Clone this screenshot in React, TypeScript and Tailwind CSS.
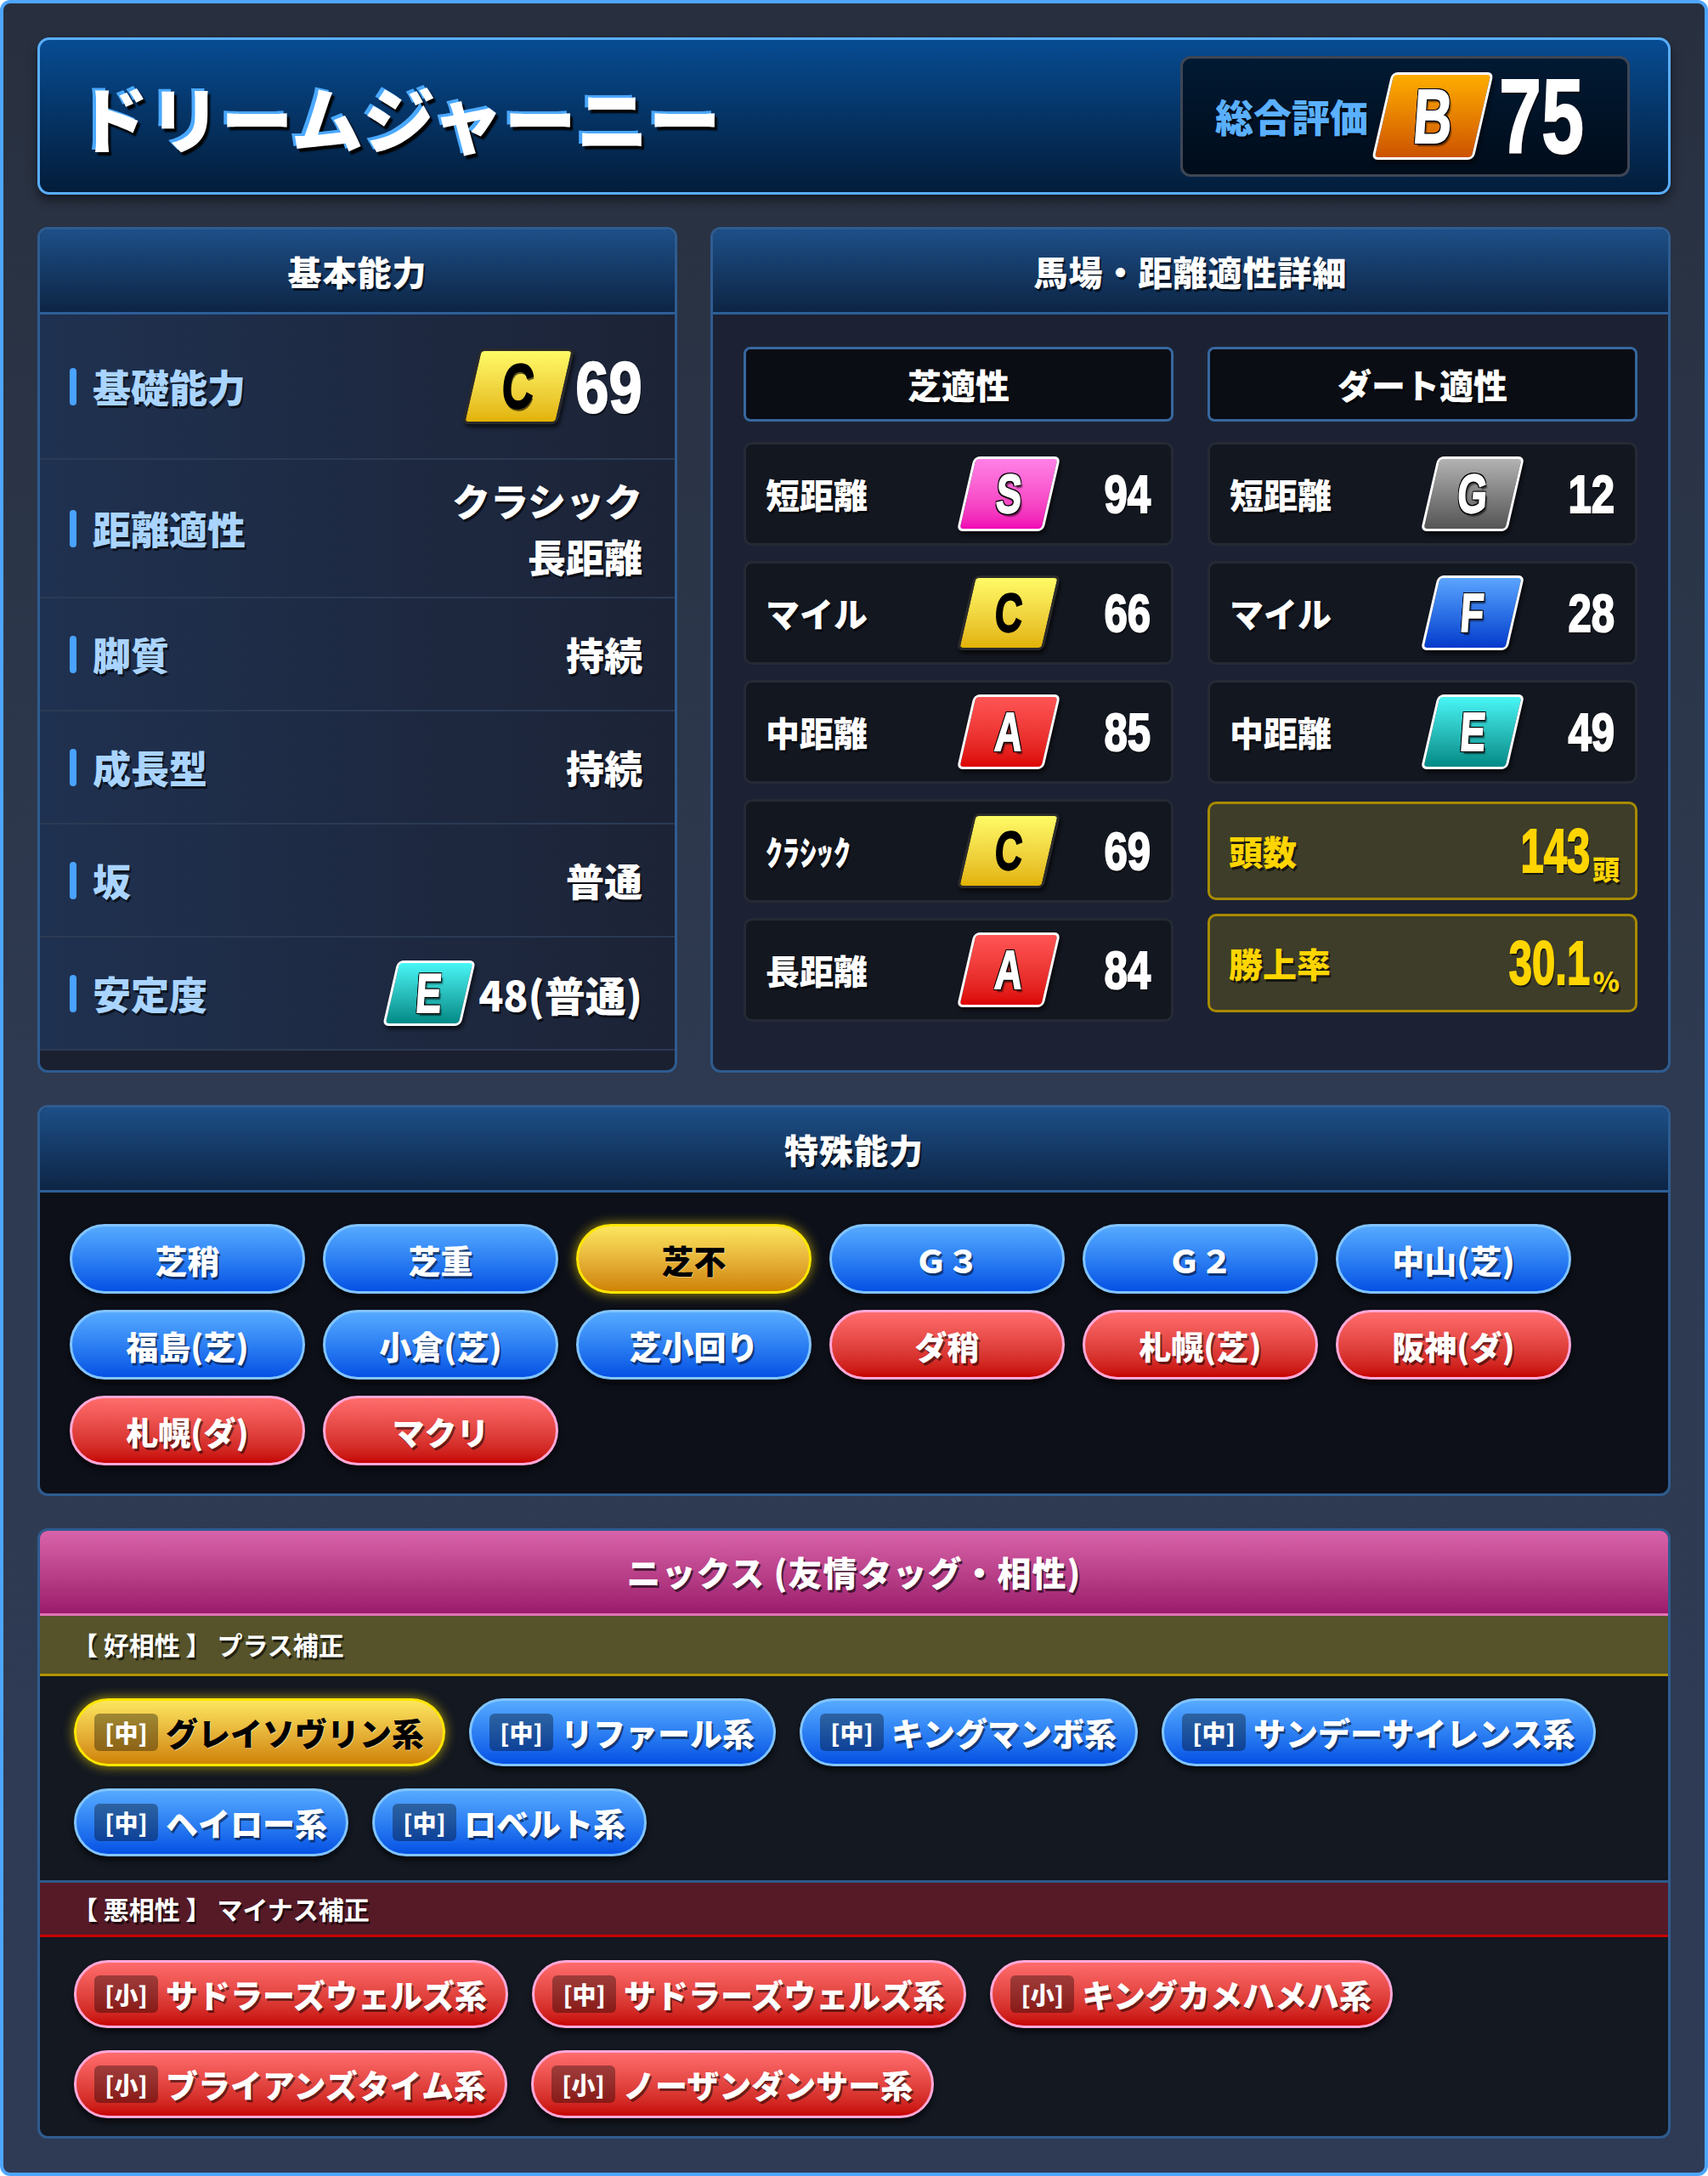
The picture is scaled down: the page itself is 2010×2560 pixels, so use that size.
import React from "react";

const JP = "font-['Noto_Sans_CJK_JP','Noto_Sans_CJK_SC',sans-serif]";
const NUM = "font-['Liberation_Sans','Arimo',sans-serif]";

type G = "S" | "A" | "B" | "C" | "E" | "F" | "G";

const gradeStyle: Record<G, string> = {
  S: "from-[#ff80e6] to-[#f000b4] border-white",
  A: "from-[#ff5454] to-[#dc0000] border-white",
  B: "from-[#ffad00] to-[#cc5200] border-white",
  C: "from-[#fffb66] to-[#e2b300] border-[#2b2b2b]",
  E: "from-[#48f6f6] to-[#008a86] border-white",
  F: "from-[#5ba4ff] to-[#0838cc] border-white",
  G: "from-[#b3b3b3] to-[#555555] border-white",
};

const badgeSize = {
  xl: "w-[120px] h-[103px] text-[90px]",
  lg: "w-[112px] h-[89px] text-[74px]",
  md: "w-[102px] h-[88px] text-[64px]",
  sm: "w-[92px] h-[77px] text-[65px]",
};

const outlined =
  "text-white [text-shadow:-2px_-2px_0_#000,2px_-2px_0_#000,-2px_2px_0_#000,2px_2px_0_#000,0_-2px_0_#000,0_2px_0_#000,-2px_0_0_#000,2px_0_0_#000,4px_4px_2px_rgba(0,0,0,0.6)]";

const shadowW = "[text-shadow:2px_3px_0_rgba(0,0,0,0.6)]";

// condensed digits: a regular bold face squeezed sideways inside a box of the squeezed width
function Narrow({
  text,
  box,
  squeeze,
  side = "end",
}: {
  text: string;
  box: string;
  squeeze: string;
  side?: "start" | "end";
}) {
  return (
    <span className={`flex ${box} ${side === "end" ? "justify-end" : "justify-start"}`}>
      <span
        className={`inline-block shrink-0 font-bold leading-none [-webkit-text-stroke:2px_currentColor] ${NUM} ${squeeze} ${
          side === "end" ? "origin-right" : "origin-left"
        }`}
      >
        {text}
      </span>
    </span>
  );
}

function Grade({ g, size }: { g: G; size: keyof typeof badgeSize }) {
  return (
    <div
      className={`flex shrink-0 items-center justify-center rounded-[7px] border-[3px] bg-gradient-to-b skew-x-[-13deg] shadow-[3px_4px_4px_rgba(0,0,0,0.6)] ${gradeStyle[g]} ${badgeSize[size]}`}
    >
      <span
        className={`inline-block skew-x-[13deg] scale-x-[0.7] font-bold leading-none [-webkit-text-stroke:2px_currentColor] ${NUM} ${
          g === "C" ? "text-black" : outlined
        }`}
      >
        {g}
      </span>
    </div>
  );
}

function PanelHeader({ title, pink }: { title: string; pink?: boolean }) {
  return (
    <div
      className={
        pink
          ? "flex h-[100px] items-center justify-center border-b-[3px] border-[#e273b6] bg-gradient-to-b from-[#d963aa] to-[#9b1a6b]"
          : "flex h-[100px] items-center justify-center border-b-[3px] border-[#2d5f98] bg-gradient-to-b from-[#1d4f88] to-[#0d2545]"
      }
    >
      <h2 className={`text-[40px] font-black tracking-[1px] text-white ${shadowW}`}>{title}</h2>
    </div>
  );
}

function BasicRow({
  label,
  h,
  children,
}: {
  label: string;
  h: string;
  children: React.ReactNode;
}) {
  return (
    <div className={`flex items-center justify-between border-b-2 border-[#2b3a54] pl-[35px] pr-[38px] ${h}`}>
      <div className="flex items-center gap-[19px]">
        <span className="h-[44px] w-[8px] rounded-full bg-[#4aa3ff]" />
        <span className={`text-[45px] font-black text-[#a9d4ff] ${shadowW}`}>{label}</span>
      </div>
      <div className={`text-right text-[45px] font-black leading-[66px] text-white ${shadowW}`}>{children}</div>
    </div>
  );
}

function AptRow({ label, g, v }: { label: string; g: G; v: string }) {
  return (
    <div className="flex h-[122px] items-center rounded-[10px] border-[3px] border-[#252a35] bg-[#131720] pl-[23px] pr-[24px]">
      <span className={`flex-1 text-[40px] font-black text-white ${shadowW}`}>{label}</span>
      <Grade g={g} size="md" />
      <span className={`text-[63px] text-white ${shadowW}`}>
        <Narrow text={v} box="w-[116px]" squeeze="scale-x-[0.78]" />
      </span>
    </div>
  );
}

function StatBox({ label, v, box, unit }: { label: string; v: string; box: string; unit: string }) {
  return (
    <div className="flex h-[116px] items-center justify-between rounded-[10px] border-[3px] border-[#a88a00] bg-[#3e3d29] pl-[22px] pr-[18px]">
      <span className={`text-[40px] font-black text-[#ffd500] ${shadowW}`}>{label}</span>
      <span className={`flex items-end font-bold text-[#ffd500] ${shadowW}`}>
        <span className="text-[72px]">
          <Narrow text={v} box={box} squeeze="scale-x-[0.68]" />
        </span>
        <span className="ml-[3px] text-[32px] font-black leading-none">{unit}</span>
      </span>
    </div>
  );
}

type Tone = "blue" | "red" | "gold";
const pillTone: Record<Tone, string> = {
  blue: "bg-gradient-to-b from-[#56aaff] to-[#0650e4] border-[#82c4ff] text-white shadow-[0_5px_6px_rgba(0,0,0,0.6)]",
  red: "bg-gradient-to-b from-[#ff6c6c] to-[#c60000] border-[#ffa8d8] text-white shadow-[0_5px_6px_rgba(0,0,0,0.6)]",
  gold: "bg-gradient-to-b from-[#fce65e] to-[#cf8300] border-[#ffe600] text-black shadow-[0_0_14px_rgba(255,222,0,0.65)]",
};

function SkillPill({ t, tone }: { t: string; tone: Tone }) {
  return (
    <div className={`flex h-[82px] w-[277px] items-center justify-center rounded-full border-[3px] ${pillTone[tone]}`}>
      <span
        className={`text-[38px] font-black ${
          tone === "gold" ? "[text-shadow:1px_1px_0_rgba(255,255,255,0.4)]" : "[text-shadow:2px_3px_0_rgba(0,0,0,0.5)]"
        }`}
      >
        {t}
      </span>
    </div>
  );
}

function NickPill({ tag, t, tone }: { tag: string; t: string; tone: Tone }) {
  return (
    <div className={`flex h-[80px] items-center gap-[9px] rounded-full border-[3px] pl-[21px] pr-[22px] ${pillTone[tone]}`}>
      <span className="flex h-[44px] w-[75px] items-center justify-center rounded-[6px] bg-black/35 text-[28px] font-black text-white">
        {tag}
      </span>
      <span
        className={`text-[38px] font-black ${
          tone === "gold" ? "[text-shadow:1px_1px_0_rgba(255,255,255,0.45)]" : "[text-shadow:2px_3px_0_rgba(0,0,0,0.5)]"
        }`}
      >
        {t}
      </span>
    </div>
  );
}

const skills: [string, Tone][] = [
  ["芝稍", "blue"],
  ["芝重", "blue"],
  ["芝不", "gold"],
  ["Ｇ３", "blue"],
  ["Ｇ２", "blue"],
  ["中山(芝)", "blue"],
  ["福島(芝)", "blue"],
  ["小倉(芝)", "blue"],
  ["芝小回り", "blue"],
  ["ダ稍", "red"],
  ["札幌(芝)", "red"],
  ["阪神(ダ)", "red"],
  ["札幌(ダ)", "red"],
  ["マクリ", "red"],
];

const good: [string, string, Tone][] = [
  ["[中]", "グレイソヴリン系", "gold"],
  ["[中]", "リファール系", "blue"],
  ["[中]", "キングマンボ系", "blue"],
  ["[中]", "サンデーサイレンス系", "blue"],
  ["[中]", "ヘイロー系", "blue"],
  ["[中]", "ロベルト系", "blue"],
];

const bad: [string, string][] = [
  ["[小]", "サドラーズウェルズ系"],
  ["[中]", "サドラーズウェルズ系"],
  ["[小]", "キングカメハメハ系"],
  ["[小]", "ブライアンズタイム系"],
  ["[小]", "ノーザンダンサー系"],
];

export default function App() {
  return (
    <div
      className={`flex h-[2560px] w-[2010px] flex-col gap-[38px] rounded-[12px] border-[4px] border-[#4ea6ff] bg-gradient-to-b from-[#28303f] via-[#2e3a51] to-[#2f3b55] p-[40px] ${JP}`}
    >
      {/* タイトル */}
      <div className="flex h-[185px] shrink-0 items-center justify-between rounded-[14px] border-[3px] border-[#5aaeff] bg-gradient-to-b from-[#074c93] to-[#031d3b] pl-[43px] pr-[45px] shadow-[0_6px_12px_rgba(0,0,0,0.5)]">
        <h1 className="text-[85px] font-black leading-none text-white [text-shadow:-4px_-3px_0_#4aa8ff,3px_4px_2px_#000]">
          ドリームジャーニー
        </h1>
        <div className="flex h-[142px] w-[529px] items-center gap-[16px] rounded-[12px] border-[3px] border-[#3e4655] bg-gradient-to-b from-[#021a34] to-[#000c1a] pl-[38px]">
          <span className={`text-[45px] font-black text-[#5ab0ff] ${shadowW}`}>総合評価</span>
          <Grade g="B" size="xl" />
          <span className={`ml-[2px] text-[125px] text-white ${shadowW}`}>
            <Narrow text="75" box="w-[100px]" squeeze="scale-x-[0.72]" side="start" />
          </span>
        </div>
      </div>

      {/* 基本能力 / 馬場・距離適性 */}
      <div className="grid grid-cols-[753px_1fr] gap-[39px]">
        <section className="flex flex-col overflow-hidden rounded-[12px] border-[3px] border-[#2e5c90] bg-[#1b2030]">
          <PanelHeader title="基本能力" />
          <div className="flex flex-col bg-gradient-to-r from-[#1f3150] to-[#1c2336]">
            <BasicRow label="基礎能力" h="h-[171px]">
              <div className="flex items-center gap-[12px]">
                <Grade g="C" size="lg" />
                <span className="text-[86px]">
                  <Narrow text="69" box="w-[78px]" squeeze="scale-x-[0.82]" />
                </span>
              </div>
            </BasicRow>
            <BasicRow label="距離適性" h="h-[163px]">
              <div>クラシック</div>
              <div>長距離</div>
            </BasicRow>
            <BasicRow label="脚質" h="h-[133px]">
              持続
            </BasicRow>
            <BasicRow label="成長型" h="h-[133px]">
              持続
            </BasicRow>
            <BasicRow label="坂" h="h-[133px]">
              普通
            </BasicRow>
            <BasicRow label="安定度" h="h-[133px]">
              <div className="flex items-center gap-[12px]">
                <Grade g="E" size="sm" />
                <span className="text-[48px]">48(普通)</span>
              </div>
            </BasicRow>
          </div>
          <div className="min-h-[23px] flex-1" />
        </section>

        <section className="overflow-hidden rounded-[12px] border-[3px] border-[#2e5c90] bg-[#1c2233] pb-[57px]">
          <PanelHeader title="馬場・距離適性詳細" />
          <div className="grid grid-cols-2 gap-[40px] px-[36px] pt-[38px]">
            <div className="flex flex-col gap-[18px]">
              <div className="mb-[6px] flex h-[88px] items-center justify-center rounded-[8px] border-[3px] border-[#36679f] bg-[#0a0d13]">
                <span className={`text-[40px] font-black text-white ${shadowW}`}>芝適性</span>
              </div>
              <AptRow label="短距離" g="S" v="94" />
              <AptRow label="マイル" g="C" v="66" />
              <AptRow label="中距離" g="A" v="85" />
              <AptRow label="ｸﾗｼｯｸ" g="C" v="69" />
              <AptRow label="長距離" g="A" v="84" />
            </div>
            <div className="flex flex-col gap-[18px]">
              <div className="mb-[6px] flex h-[88px] items-center justify-center rounded-[8px] border-[3px] border-[#36679f] bg-[#0a0d13]">
                <span className={`text-[40px] font-black text-white ${shadowW}`}>ダート適性</span>
              </div>
              <AptRow label="短距離" g="G" v="12" />
              <AptRow label="マイル" g="F" v="28" />
              <AptRow label="中距離" g="E" v="49" />
              <div className="mt-[3px] flex flex-col gap-[16px]">
                <StatBox label="頭数" v="143" box="w-[82px]" unit="頭" />
                <StatBox label="勝上率" v="30.1" box="w-[96px]" unit="%" />
              </div>
            </div>
          </div>
        </section>
      </div>

      {/* 特殊能力 */}
      <section className="overflow-hidden rounded-[12px] border-[3px] border-[#2e5c90] bg-[#0d1019]">
        <PanelHeader title="特殊能力" />
        <div className="flex flex-wrap gap-x-[21px] gap-y-[19px] px-[35px] pb-[38px] pt-[37px]">
          {skills.map(([t, tone]) => (
            <SkillPill key={t} t={t} tone={tone} />
          ))}
        </div>
      </section>

      {/* ニックス */}
      <section className="overflow-hidden rounded-[12px] border-[3px] border-[#2e5c90] bg-[#131821]">
        <PanelHeader title="ニックス (友情タッグ・相性)" pink />
        <div className="flex h-[71px] items-center border-b-[3px] border-[#b39400] bg-[#56532a] px-[38px]">
          <span className={`text-[30px] font-bold text-white ${shadowW}`}>【 好相性 】 プラス補正</span>
        </div>
        <div className="flex flex-wrap gap-x-[28px] gap-y-[26px] px-[40px] pb-[28px] pt-[26px]">
          {good.map(([tag, t, tone]) => (
            <NickPill key={t} tag={tag} t={t} tone={tone} />
          ))}
        </div>
        <div className="flex h-[67px] items-center border-b-[3px] border-t-[3px] border-b-[#c80000] border-t-[#2c5a8c] bg-[#561a27] px-[38px]">
          <span className={`text-[30px] font-bold text-white ${shadowW}`}>【 悪相性 】 マイナス補正</span>
        </div>
        <div className="flex flex-wrap gap-x-[28px] gap-y-[26px] px-[40px] pb-[29px] pt-[27px]">
          {bad.map(([tag, t], i) => (
            <NickPill key={i} tag={tag} t={t} tone="red" />
          ))}
        </div>
      </section>
    </div>
  );
}
